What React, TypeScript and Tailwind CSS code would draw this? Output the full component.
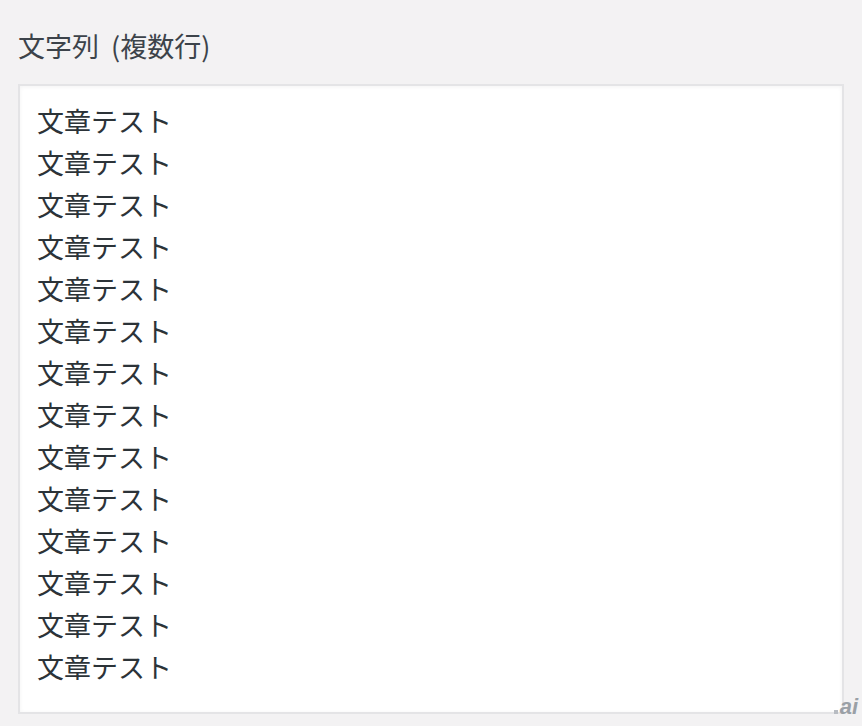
const lines = Array.from({ length: 14 }, () => "文章テスト");

export default function App() {
  return (
    <div className="relative w-[862px] h-[726px] bg-[#f3f2f3] overflow-hidden font-['Noto_Sans_CJK_JP','Noto_Sans',sans-serif]">
      <div className="pl-[18px] pt-[27px]">
        <div className="text-[27px] leading-[38px] text-[#3c434a] h-[57px]">
          文字列<span className="inline-block w-[12px]" />(複数行)
        </div>
        <div className="w-[826px] h-[630px] bg-white border-2 border-[#e4e4e6] shadow-[inset_0_1px_4px_rgba(0,0,0,0.05)] pl-[17px] pt-[14px]">
          {lines.map((t, i) => (
            <div key={i} className="text-[27px] leading-[42px] text-[#2c3338]">{t}</div>
          ))}
        </div>
      </div>
      <div className="absolute right-[4px] bottom-[8px] flex items-end gap-[2px]">
        <span className="w-[4px] h-[4px] bg-[#b8bcc2] mb-[4px]" />
        <span className="text-[22px] leading-[22px] italic font-bold text-[#9aa0a6] font-['Liberation_Sans',sans-serif]">ai</span>
      </div>
    </div>
  );
}
